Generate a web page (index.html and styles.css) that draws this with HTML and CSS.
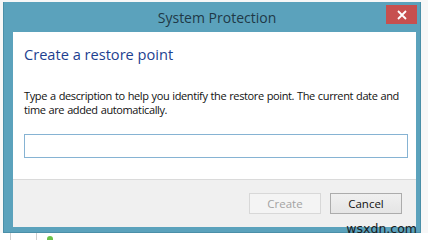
FILE: index.html
```html
<!DOCTYPE html>
<html lang="en">
  <head>
    <meta charset="UTF-8" />
    <title>System Protection</title>
    <link rel="stylesheet" href="styles.css">
  </head>
  <body>
    <div class="window">
      <div class="titlebar">
        <span class="title">System Protection</span>
        <button class="close" type="button">
          <svg width="10" height="10" viewBox="0 0 10 10">
            <path d="M1 1L9 9M9 1L1 9" stroke="#fff" stroke-width="1.8" />
          </svg>
        </button>
      </div>
      <div class="client">
        <div class="content">
          <h1>Create a restore point</h1>
          <p>
            Type a description to help you identify the restore point. The
            current date and time are added automatically.
          </p>
          <input type="text" class="desc" />
        </div>
        <div class="footer">
          <button type="button" class="btn" disabled>Create</button>
          <button type="button" class="btn">Cancel</button>
        </div>
      </div>
    </div>
    <div class="desk">
      <div class="col col-a"></div>
      <div class="col col-b"><span class="dot"></span></div>
    </div>
    <div class="watermark">wsxdn.com</div>
  </body>
</html>
```

FILE: styles.css
```css
body {
  margin: 0;
  width: 428px;
  height: 240px;
  overflow: hidden;
  background-color: #f7f7f7;
  font-family: "Open Sans", "Noto Sans", sans-serif;
  position: relative;
}
.window {
  margin: 2px 7px 0 3px;
  padding: 0 4px 5px 9px;
  background-color: #5ba2bc;
  border: 1px solid #4b8fa8;
  border-top: none;
}
.titlebar {
  height: 30px;
  display: flex;
  align-items: center;
  justify-content: center;
  position: relative;
}
.title {
  font-size: 14px;
  color: #1f3947;
  margin-left: 5px;
}
.close {
  position: absolute;
  top: 3px;
  right: -1px;
  width: 31px;
  height: 19px;
  border: none;
  padding: 0;
  background-color: #c7504f;
  display: flex;
  align-items: center;
  justify-content: center;
}
.client {
  background-color: #fff;
  height: 195px;
  display: flex;
  flex-direction: column;
}
.content {
  flex: 1;
  padding: 12px 8px 0 11px;
}
h1 {
  margin: 0;
  font-size: 14.6px;
  font-weight: normal;
  color: #1d3f90;
  line-height: 20px;
}
p {
  margin: 25px 0 0;
  font-size: 11px;
  letter-spacing: -0.38px;
  word-spacing: 0.5px;
  line-height: 14px;
  color: #111;
}
.desc {
  display: block;
  margin-top: 17px;
  width: 384px;
  height: 24px;
  box-sizing: border-box;
  border: 1px solid #86b3d3;
  padding: 0 4px;
}
.footer {
  height: 47px;
  border-top: 1px solid #dadada;
  background-color: #f0f0f0;
  display: flex;
  justify-content: flex-end;
  align-items: center;
  gap: 9px;
  padding-right: 14px;
}
.btn {
  width: 72px;
  height: 21px;
  font-family: "Open Sans", "Noto Sans", sans-serif;
  font-size: 11.5px;
  color: #111;
  background: linear-gradient(#f0f0f0, #e5e5e5);
  border: 1px solid #acacac;
  padding: 0;
}
.btn:disabled {
  color: #a3a3a3;
  background: #f4f4f4;
  border-color: #d8d8d8;
}
.desk {
  display: flex;
  height: 8px;
  background-color: #fff;
}
.col-a {
  width: 25px;
  margin-left: 10px;
  border-left: 1px solid #cfcfcf;
  border-right: 1px solid #cfcfcf;
}
.col-b {
  padding-left: 10px;
}
.dot {
  display: block;
  width: 6px;
  height: 4px;
  margin-top: 3px;
  background-color: #6cc24a;
  border-radius: 3px 3px 0 0;
}
.watermark {
  position: absolute;
  right: 11px;
  top: 221px;
  font-family: "DejaVu Sans", sans-serif;
  font-size: 12.5px;
  color: #1b1b1b;
}
```
